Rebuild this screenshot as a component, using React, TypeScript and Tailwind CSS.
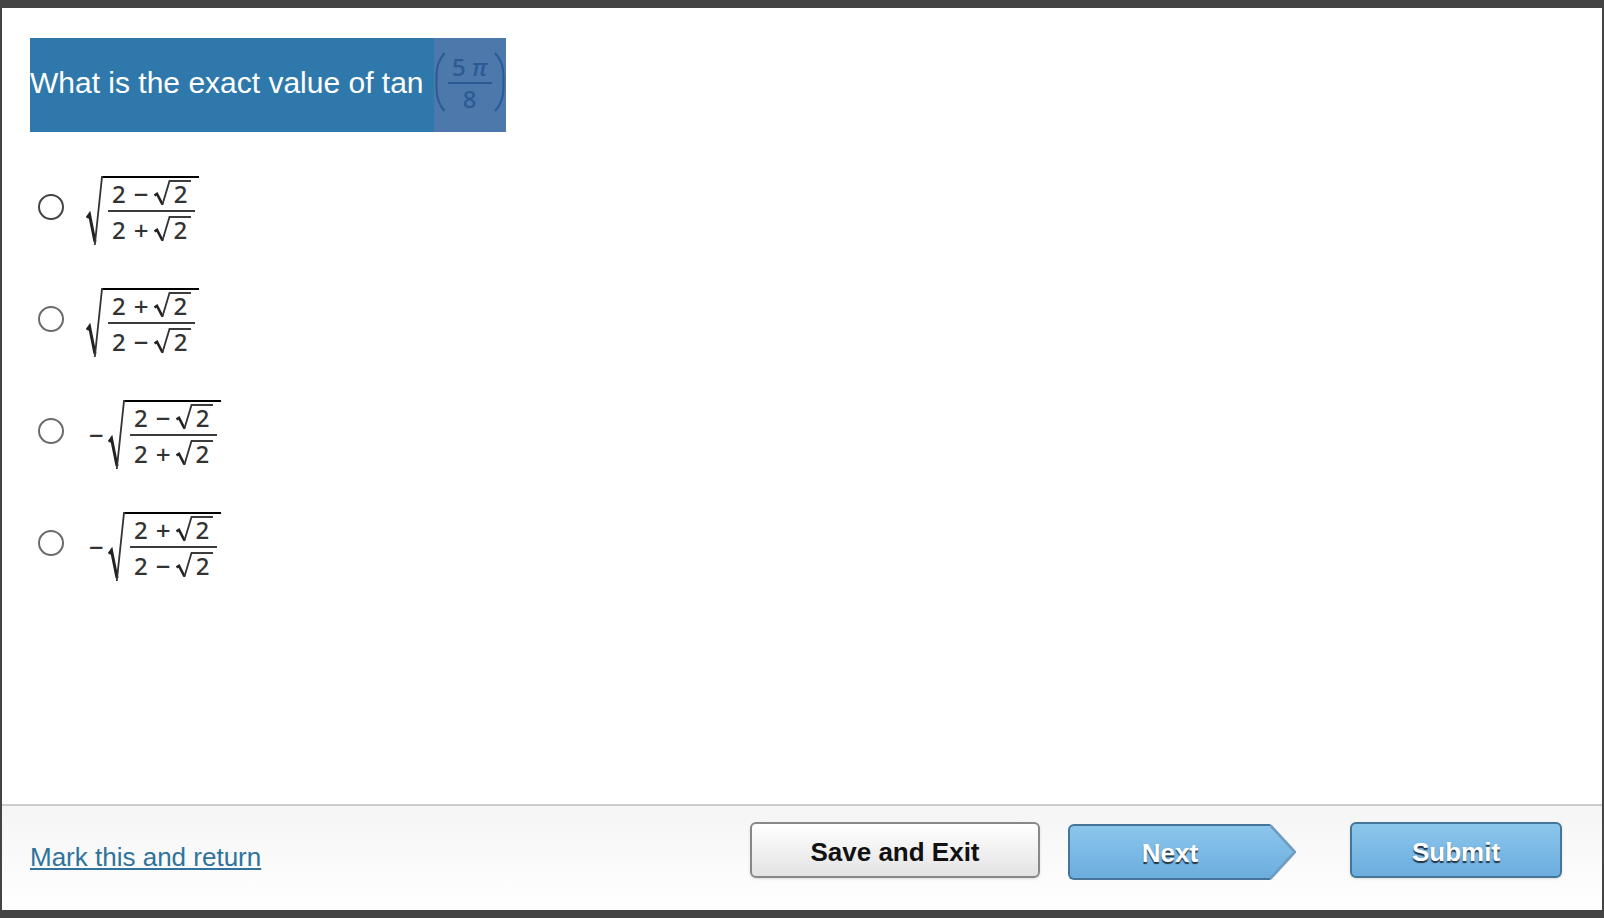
import React from "react";

type Sign = "−" | "+";

interface Choice {
  id: string;
  negative: boolean;
  top: Sign;
  bottom: Sign;
}

const choices: Choice[] = [
  { id: "a", negative: false, top: "−", bottom: "+" },
  { id: "b", negative: false, top: "+", bottom: "−" },
  { id: "c", negative: true, top: "−", bottom: "+" },
  { id: "d", negative: true, top: "+", bottom: "−" },
];

const mathFont = "font-medium font-['Noto_Sans','DejaVu_Sans',sans-serif]";

function SmallRoot() {
  return (
    <span className="flex">
      <svg className="h-7 w-4 shrink-0" viewBox="0 0 16 28" fill="none" aria-hidden="true">
        <path d="M0.5 15.5 L3 13.8 L8.5 24.5" stroke="#222" strokeWidth="2.6" />
        <path d="M8.3 25 L15.5 1 H16" stroke="#333" strokeWidth="1.8" />
      </svg>
      <span className="border-t-2 border-[#3c3c3c] pl-1 pr-1 leading-6">2</span>
    </span>
  );
}

function Term({ sign }: { sign: Sign }) {
  return (
    <span className="flex items-start pl-1 pr-1 leading-6">
      <span className="mt-[2px]">2</span>
      <span className="mt-[2px] ml-2 mr-[5px] text-[26px] leading-6">{sign}</span>
      <SmallRoot />
    </span>
  );
}

function Formula({ choice }: { choice: Choice }) {
  return (
    <span className={`flex items-center text-2xl text-[#333] ${mathFont}`}>
      {choice.negative && <span className="ml-[3px] mr-1 text-[26px] leading-6">−</span>}
      <span className="flex">
        <svg className="h-[70px] w-[17px] shrink-0" viewBox="0 0 17 70" fill="none" aria-hidden="true">
          <path d="M1 42 L3.5 38.5 L9 66" stroke="#222" strokeWidth="3" />
          <path d="M8.8 69 L16 1 H17" stroke="#333" strokeWidth="1.8" />
        </svg>
        <span className="flex flex-col border-t-2 border-black pl-[5px] pr-1 pt-[2px]">
          <span className="border-b-2 border-[#3c3c3c] pb-[2px]">
            <Term sign={choice.top} />
          </span>
          <span className="pt-1">
            <Term sign={choice.bottom} />
          </span>
        </span>
      </span>
    </span>
  );
}

function Question() {
  return (
    <h1 className="flex h-[94px] w-fit bg-[#2f78ab] text-3xl font-normal text-white">
      <span className="pt-[25px] pr-[10px] leading-10">What is the exact value of tan</span>
      <span className={`flex items-start bg-[#4d78ab] pt-[14px] text-2xl text-[#2b5a94] ${mathFont}`}>
        <svg className="h-[60px] w-[14px]" viewBox="0 0 14 60" fill="none" aria-hidden="true">
          <path d="M10.5 1 Q2.5 10 2.5 24 V36 Q2.5 50 10.5 59" stroke="currentColor" strokeWidth="2" />
        </svg>
        <span className="flex w-11 flex-col text-center leading-[30px]">
          <span className="border-b-2 border-current">5 <i>π</i></span>
          <span>8</span>
        </span>
        <svg className="h-[60px] w-[14px]" viewBox="0 0 14 60" fill="none" aria-hidden="true">
          <path d="M3 1 Q11.5 10 11.5 24 V36 Q11.5 50 3 59" stroke="currentColor" strokeWidth="2" />
        </svg>
      </span>
    </h1>
  );
}

export default function App() {
  return (
    <div className="flex min-h-screen flex-col bg-[#444] px-[2px] py-2 font-['Liberation_Sans',Arial,sans-serif]">
      <main className="flex-1 bg-white px-7 pt-[30px]">
        <Question />
        <fieldset className="flex flex-col gap-[42px] pt-11 pl-2">
          {choices.map((choice, index) => (
            <label key={choice.id} htmlFor={choice.id} className="flex w-fit items-start gap-[22px]">
              <input
                id={choice.id}
                type="radio"
                name="answer"
                className={`mt-[18px] size-[26px] shrink-0 appearance-none rounded-full border-2 bg-white checked:bg-[#2f78ab] ${
                  index === 0 ? "border-[#444]" : "border-[#6b6b6b]"
                }`}
              />
              <Formula choice={choice} />
            </label>
          ))}
        </fieldset>
      </main>
      <footer className="flex h-[106px] items-start justify-between border-t-2 border-[#ccc] bg-linear-to-b from-[#f5f5f5] to-white pr-10 pl-7">
        <a
          href="#return"
          className="pt-[35px] text-[26px] leading-8 text-[#2f739c] underline decoration-2 underline-offset-2"
        >
          Mark this and return
        </a>
        <div className="flex items-start pt-4 text-[26px] font-bold">
          <button
            type="button"
            className="mr-7 h-14 w-[290px] rounded-md border-2 border-[#888] bg-linear-to-b from-white to-[#e3e3e3] pt-1 text-[#111] shadow-sm"
          >
            Save and Exit
          </button>
          <button type="button" className="mt-[2px] mr-[54px] flex h-14 text-white">
            <span className="h-14 w-[202px] rounded-l-md border-2 border-r-0 border-[#457599] bg-linear-to-b from-[#8cc6ec] to-[#6badde] leading-[54px] [text-shadow:0_2px_1px_#234]">
              Next
            </span>
            <svg className="h-14 w-[26px]" viewBox="0 0 26 56" aria-hidden="true">
              <defs>
                <linearGradient id="arrow" x1="0" y1="0" x2="0" y2="1">
                  <stop offset="0" stopColor="#8cc6ec" />
                  <stop offset="1" stopColor="#6badde" />
                </linearGradient>
              </defs>
              <path d="M0 0 L26 28 L0 56 Z" fill="url(#arrow)" />
              <path d="M0 1 L25 28 L0 55" fill="none" stroke="#6f9cc2" strokeWidth="2.6" />
            </svg>
          </button>
          <button
            type="button"
            className="h-14 w-[212px] rounded-md border-2 border-[#457599] bg-linear-to-b from-[#8cc6ec] to-[#6badde] pt-1 text-white shadow-sm [text-shadow:0_2px_1px_#234]"
          >
            Submit
          </button>
        </div>
      </footer>
    </div>
  );
}
